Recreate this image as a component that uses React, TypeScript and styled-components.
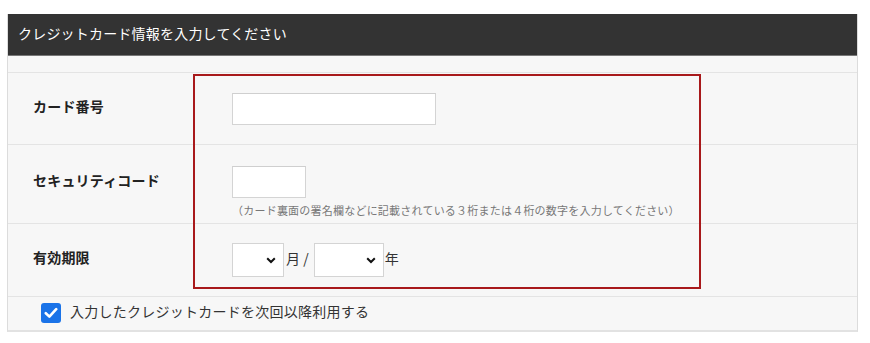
import React from "react";
import styled, { createGlobalStyle } from "styled-components";

const Global = createGlobalStyle`
  html, body { margin: 0; padding: 0; background: #fff; }
  body { font-family: "Noto Sans CJK JP", "Noto Sans", sans-serif; color: #333; }
`;

const Page = styled.div`
  padding: 14px 12px 0 7px;
  width: 870px;
  box-sizing: border-box;
`;

const Panel = styled.section`
  width: 851px;
  border: 1px solid #dcdcdc;
  border-top: none;
  border-bottom: 2px solid #e2e2e2;
  background: #f7f7f7;
  box-sizing: border-box;
`;

const Header = styled.h2`
  margin: 0;
  height: 42px;
  display: flex;
  align-items: center;
  padding: 0 0 3px 10px;
  background: #333;
  border-bottom: 1px solid #777;
  color: #fff;
  font-size: 14px;
  font-weight: 400;
  box-sizing: border-box;
  letter-spacing: 0.2px;
`;

const Spacer = styled.div`
  height: 16px;
  border-bottom: 1px solid #e4e4e4;
`;

const Rows = styled.div`
  position: relative;
`;

const Row = styled.div<{ $h: number }>`
  display: grid;
  grid-template-columns: 224px 1fr;
  min-height: ${(p) => p.$h}px;
  border-bottom: 1px solid #e4e4e4;
  box-sizing: border-box;
`;

const Label = styled.div<{ $shift?: number }>`
  display: flex;
  align-items: center;
  padding-left: 25px;
  padding-bottom: ${(p) => p.$shift ?? 6}px;
  font-size: 14px;
  font-weight: 700;
  color: #222;
  letter-spacing: 0.2px;
`;

const Cell = styled.div<{ $pt?: number }>`
  display: flex;
  flex-direction: column;
  justify-content: ${(p) => (p.$pt ? "flex-start" : "center")};
  padding-top: ${(p) => p.$pt ?? 0}px;
`;

const TextInput = styled.input<{ $w: number; $h: number }>`
  width: ${(p) => p.$w}px;
  height: ${(p) => p.$h}px;
  box-sizing: border-box;
  border: 1px solid #d4d4d4;
  border-top-color: #cfcfcf;
  background: #fff;
  margin: 0;
  padding: 0 6px;
  outline: none;
`;

const Note = styled.p`
  margin: 4px 0 0 0;
  font-size: 11px;
  line-height: 16px;
  color: #777;
  letter-spacing: 0.22px;
`;

const DateLine = styled.div`
  display: flex;
  align-items: center;
  font-size: 14px;
  color: #333;
`;

const SelectWrap = styled.span<{ $w: number }>`
  position: relative;
  display: inline-block;
  width: ${(p) => p.$w}px;
  height: 34px;
`;

const Select = styled.select`
  appearance: none;
  width: 100%;
  height: 100%;
  box-sizing: border-box;
  border: 1px solid #d4d4d4;
  background: #fff;
  margin: 0;
  font-size: 14px;
`;

const Chevron = styled.svg`
  position: absolute;
  right: 8px;
  top: 14px;
  pointer-events: none;
`;

const Sep = styled.span`
  padding: 0 0 5px 2px;
  margin-right: 5px;
`;

const Unit = styled.span`
  margin-left: 1px;
  padding-bottom: 5px;
`;

const Highlight = styled.div`
  position: absolute;
  left: 185px;
  top: 1px;
  width: 508px;
  height: 215px;
  border: 2px solid #a8191b;
  box-sizing: border-box;
  pointer-events: none;
`;

const CheckRow = styled.label`
  display: flex;
  align-items: center;
  gap: 9px;
  height: 33px;
  padding-left: 33px;
  font-size: 14px;
  color: #333;
  letter-spacing: 0.25px;
`;

const CheckText = styled.span`
  padding-bottom: 5px;
`;

const CheckBox = styled.span`
  width: 20px;
  height: 20px;
  border-radius: 3px;
  background: #1a73e8;
  display: flex;
  align-items: center;
  justify-content: center;
  margin-top: -1px;
`;

const ChevronIcon = () => (
  <Chevron width="10" height="7" viewBox="0 0 10 7">
    <path d="M1.2 1.2 L5 5 L8.8 1.2" fill="none" stroke="#111" strokeWidth="2" />
  </Chevron>
);

export default function App() {
  return (
    <>
      <Global />
      <Page>
        <Panel>
          <Header>クレジットカード情報を入力してください</Header>
          <Spacer />
          <Rows>
            <Row $h={72}>
              <Label>カード番号</Label>
              <Cell>
                <TextInput $w={204} $h={32} />
              </Cell>
            </Row>
            <Row $h={79}>
              <Label $shift={8}>セキュリティコード</Label>
              <Cell $pt={21}>
                <TextInput $w={74} $h={32} />
                <Note>（カード裏面の署名欄などに記載されている３桁または４桁の数字を入力してください）</Note>
              </Cell>
            </Row>
            <Row $h={73}>
              <Label>有効期限</Label>
              <Cell>
                <DateLine>
                  <SelectWrap $w={52}>
                    <Select defaultValue="" />
                    <ChevronIcon />
                  </SelectWrap>
                  <Sep>月 /</Sep>
                  <SelectWrap $w={70}>
                    <Select defaultValue="" />
                    <ChevronIcon />
                  </SelectWrap>
                  <Unit>年</Unit>
                </DateLine>
              </Cell>
            </Row>
            <Highlight />
          </Rows>
          <CheckRow>
            <CheckBox>
              <svg width="14" height="12" viewBox="0 0 14 12">
                <path d="M1.8 6.2 L5.4 9.6 L12.2 2.2" fill="none" stroke="#fff" strokeWidth="2.6" strokeLinecap="round" strokeLinejoin="round" />
              </svg>
            </CheckBox>
            <CheckText>入力したクレジットカードを次回以降利用する</CheckText>
          </CheckRow>
        </Panel>
      </Page>
    </>
  );
}
